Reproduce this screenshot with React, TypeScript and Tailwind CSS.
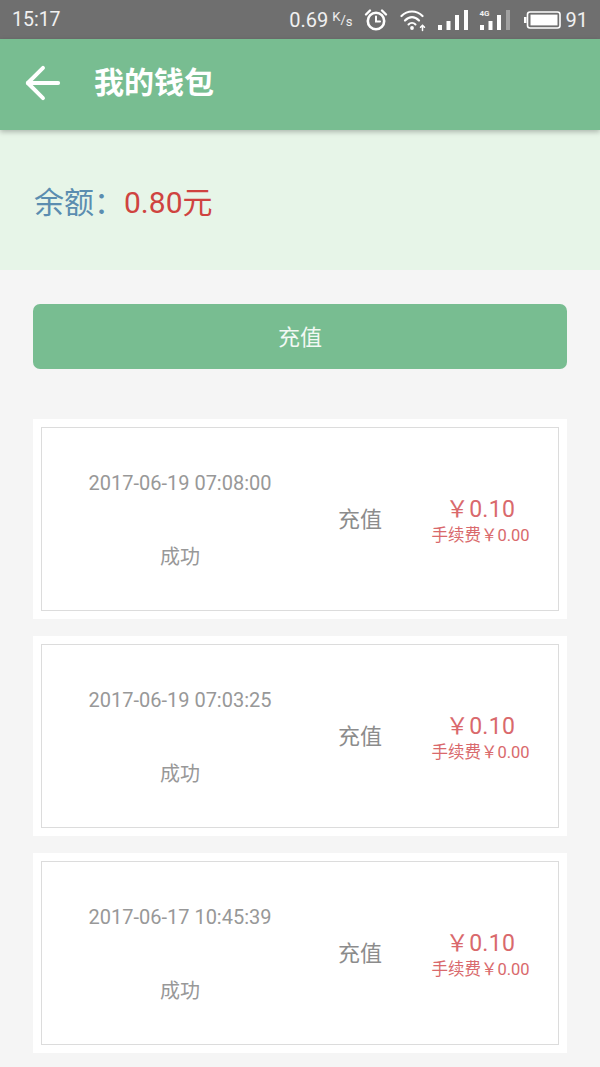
import { ArrowLeft } from 'lucide-react'

const RECORDS = [
  { time: '2017-06-19 07:08:00' },
  { time: '2017-06-19 07:03:25' },
  { time: '2017-06-17 10:45:39' },
]

const FONT = "font-['Roboto','Noto_Sans_CJK_SC',sans-serif]"

function AlarmIcon() {
  return (
    <svg width="24" height="24" viewBox="0 0 24 24" fill="none" stroke="#fff" strokeLinecap="round">
      <circle cx="12" cy="13" r="8.2" strokeWidth="2.6" />
      <path d="M12 8.5V13.5H16" strokeWidth="2" />
      <path d="M2 6.5L6 2.5M22 6.5L18 2.5" strokeWidth="2.4" />
    </svg>
  )
}

function WifiIcon() {
  return (
    <svg width="28" height="24" viewBox="0 0 28 24" fill="none" stroke="#fff" strokeLinecap="round">
      <path d="M1.5 8C7.5 2 16.5 2 22.5 8" strokeWidth="2.2" />
      <path d="M5 12.5C9.5 8 14.5 8 19 12.5" strokeWidth="2.2" />
      <path d="M8.5 16.5C10.5 14.5 13.5 14.5 15.5 16.5" strokeWidth="2" />
      <circle cx="12" cy="20" r="1.9" fill="#fff" stroke="none" />
      <path d="M22.5 22.5V17.5M20.5 19.3L22.5 17.3L24.5 19.3" strokeWidth="1.5" />
    </svg>
  )
}

function SignalBars({ dim }: { dim?: boolean }) {
  return (
    <svg width="30" height="20" viewBox="0 0 30 20" fill="#fff" className="block">
      <rect x="0" y="15" width="4" height="5" />
      <rect x="8.5" y="11" width="4" height="9" />
      <rect x="17" y="5" width="4" height="15" />
      <rect x="26" y="0" width="4" height="20" fill={dim ? '#a0a0a0' : '#fff'} />
    </svg>
  )
}

function BatteryIcon() {
  return (
    <svg width="37" height="18" viewBox="0 0 37 18" fill="none" className="block">
      <rect x="0" y="6" width="2.5" height="6" fill="#fff" />
      <rect x="3.5" y="1" width="32.5" height="16" rx="2.5" stroke="#fff" strokeWidth="1.6" />
      <rect x="6.5" y="3.6" width="27" height="10.8" fill="#fff" />
    </svg>
  )
}

function StatusBar() {
  return (
    <div className="h-[39px] bg-[#6f6f6f] text-white/90 flex items-center justify-between pl-[12px] pr-[12px]">
      <span className="text-[19.5px]">15:17</span>
      <div className="flex items-center">
        <span className="text-[20px]">0.69</span>
        <span className="flex text-[13px] leading-none ml-[4px] mr-[11px]">
          <span className="-translate-y-[3px]">K</span>
          <span>/</span>
          <span className="translate-y-[2px]">s</span>
        </span>
        <AlarmIcon />
        <span className="ml-[12px]"><WifiIcon /></span>
        <span className="ml-[10px]"><SignalBars /></span>
        <span className="ml-[12px] relative">
          <SignalBars dim />
          <span className="absolute left-0 top-0 text-[8px] font-bold leading-none">4G</span>
        </span>
        <span className="ml-[14px]"><BatteryIcon /></span>
        <span className="text-[20px] ml-[5px]">91</span>
      </div>
    </div>
  )
}

function RecordCard({ time }: { time: string }) {
  return (
    <div className="bg-white p-[8px] h-[200px]">
      <div className="h-full border border-[#dcdcdc] flex items-center">
        <div className="w-[276px] flex flex-col items-center text-[#989898] text-[20px] pt-[2px]">
          <p className="leading-[28px]">{time}</p>
          <p className="leading-[28px] mt-[46px]">成功</p>
        </div>
        <p className="w-[84px] text-center text-[#8c8c8c] text-[22px]">充值</p>
        <div className="flex-1 flex flex-col items-center text-[#d9696c] pl-[1px] pt-[4px]">
          <p className="text-[23px] leading-[28px] tracking-[0.3px]">￥0.10</p>
          <p className="text-[16.5px] leading-[22px] mt-[1px]">手续费￥0.00</p>
        </div>
      </div>
    </div>
  )
}

export default function App() {
  return (
    <div className={`w-[600px] h-[1067px] overflow-hidden bg-[#f5f5f5] ${FONT}`}>
      <StatusBar />

      {/* Header */}
      <div className="relative h-[91px] bg-[#78bd91] flex items-center shadow-[0_2px_5px_rgba(0,0,0,0.25)] pb-[4px]">
        <ArrowLeft size={52} strokeWidth={1.8} color="#fff" className="ml-[17px]" />
        <h1 className="ml-[25px] text-white text-[30px] font-bold">我的钱包</h1>
      </div>

      {/* Balance */}
      <div className="h-[140px] bg-[#e7f5e8] flex items-center pl-[34px] text-[30px] pt-[4px]">
        <span className="text-[#5b8db0]">余额：</span>
        <span className="text-[#cf4340]">0.80元</span>
      </div>

      <div className="px-[33px]">
        <button className="w-full h-[65px] mt-[34px] bg-[#78bd91] rounded-[7px] text-white/90 text-[22px] pt-[2px]">充值</button>

        <div className="mt-[50px] flex flex-col gap-[17px]">
          {RECORDS.map(r => <RecordCard key={r.time} time={r.time} />)}
        </div>
      </div>
    </div>
  )
}
